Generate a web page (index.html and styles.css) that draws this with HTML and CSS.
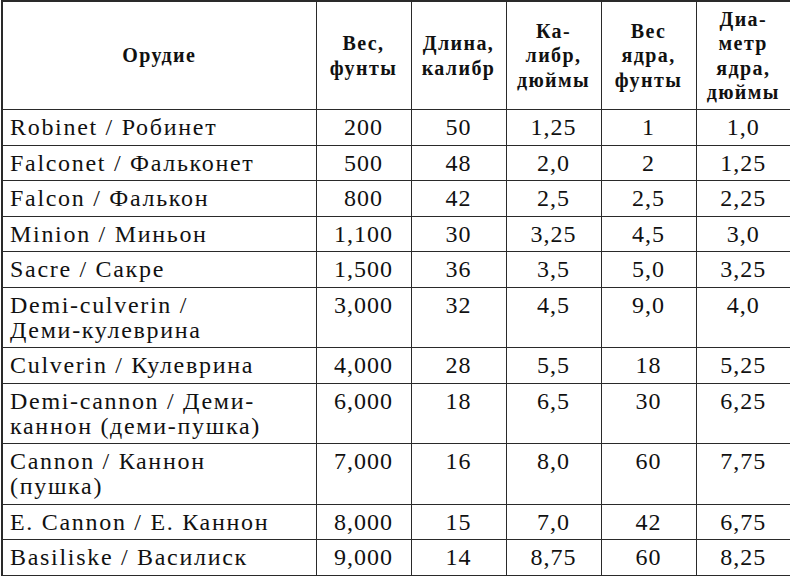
FILE: index.html
```html
<!DOCTYPE html>
<html lang="ru">
<head>
<meta charset="utf-8">
<link rel="stylesheet" href="styles.css">
</head>
<body>
<table class="guns">
  <colgroup>
    <col class="c-name"><col class="c-num"><col class="c-num"><col class="c-num"><col class="c-num"><col class="c-num">
  </colgroup>
  <thead>
    <tr>
      <th>Орудие</th>
      <th>Вес,<br>фунты</th>
      <th>Длина,<br>калибр</th>
      <th>Ка-<br>либр,<br>дюймы</th>
      <th>Вес<br>ядра,<br>фунты</th>
      <th>Диа-<br>метр<br>ядра,<br>дюймы</th>
    </tr>
  </thead>
  <tbody>
    <tr><td class="name">Robinet / Робинет</td><td>200</td><td>50</td><td>1,25</td><td>1</td><td>1,0</td></tr>
    <tr><td class="name">Falconet / Фальконет</td><td>500</td><td>48</td><td>2,0</td><td>2</td><td>1,25</td></tr>
    <tr><td class="name">Falcon / Фалькон</td><td>800</td><td>42</td><td>2,5</td><td>2,5</td><td>2,25</td></tr>
    <tr><td class="name">Minion / Миньон</td><td>1,100</td><td>30</td><td>3,25</td><td>4,5</td><td>3,0</td></tr>
    <tr><td class="name">Sacre / Сакре</td><td>1,500</td><td>36</td><td>3,5</td><td>5,0</td><td>3,25</td></tr>
    <tr><td class="name">Demi-culverin /<br>Деми-кулеврина</td><td>3,000</td><td>32</td><td>4,5</td><td>9,0</td><td>4,0</td></tr>
    <tr><td class="name">Culverin / Кулеврина</td><td>4,000</td><td>28</td><td>5,5</td><td>18</td><td>5,25</td></tr>
    <tr><td class="name">Demi-cannon / Деми-<br>каннон (деми-пушка)</td><td>6,000</td><td>18</td><td>6,5</td><td>30</td><td>6,25</td></tr>
    <tr><td class="name">Cannon / Каннон<br>(пушка)</td><td>7,000</td><td>16</td><td>8,0</td><td>60</td><td>7,75</td></tr>
    <tr><td class="name">E. Cannon / E. Каннон</td><td>8,000</td><td>15</td><td>7,0</td><td>42</td><td>6,75</td></tr>
    <tr><td class="name">Basiliske / Василиск</td><td>9,000</td><td>14</td><td>8,75</td><td>60</td><td>8,25</td></tr>
  </tbody>
</table>
</body>
</html>
```
FILE: styles.css
```css
html, body {
  margin: 0;
  padding: 0;
  background: #ffffff;
}

.guns {
  margin: 0 0 0 1px;
  width: 788px;
  table-layout: fixed;
  border-collapse: collapse;
  border: 2px solid #2a2a2a;
  font-family: "Liberation Serif", "Times New Roman", serif;
  color: #111111;
}

.c-name { width: 314px; }
.c-num { width: 95px; }

.guns th,
.guns td {
  border: 1px solid #2a2a2a;
}

.guns th {
  height: 107px;
  padding: 0 2px;
  font-size: 20px;
  font-weight: bold;
  line-height: 24.5px;
  text-align: center;
  vertical-align: middle;
  letter-spacing: 1.4px;
}

.guns td {
  padding: 5px 4px 4.5px 4px;
  font-size: 24px;
  line-height: 25px;
  text-align: center;
  vertical-align: top;
  letter-spacing: 1px;
}

.guns td.name {
  text-align: left;
  padding-left: 7px;
  letter-spacing: 1.7px;
}
```
